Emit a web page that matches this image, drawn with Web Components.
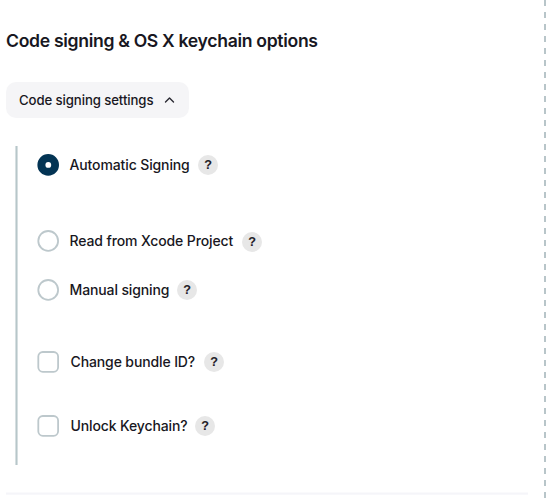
<!DOCTYPE html>
<html lang="en">
<head>
<meta charset="utf-8">
<title>Code signing</title>
<style>
body{margin:0;background:#fff;color:#181722;font-family:Inter,"Liberation Sans",sans-serif;overflow:hidden}
</style>
</head>
<body>
<signing-page>
  <section-title slot="title">Code signing &amp; OS X keychain options</section-title>
  <toggle-button slot="toggle">Code signing settings</toggle-button>
  <option-group>
    <option-row kind="radio" checked style="--w:120px;--qy:0px">Automatic Signing</option-row>
    <option-row kind="radio" style="--gap:54px;--w:164px;--qy:1px">Read from Xcode Project</option-row>
    <option-row kind="radio" style="--gap:27px;--w:99px">Manual signing</option-row>
    <option-row kind="check" style="--gap:50px;--w:125px">Change bundle ID?</option-row>
    <option-row kind="check" style="--gap:42px;--w:116px">Unlock Keychain?</option-row>
  </option-group>
</signing-page>
<script>
const define = (name, html) => customElements.define(name, class extends HTMLElement {
  constructor() {
    super();
    this.attachShadow({mode: 'open'}).innerHTML = html;
  }
});

define('help-badge', `<style>
:host{display:flex;flex:none;box-sizing:border-box;width:20px;height:20px;padding-top:1px;border-radius:50%;background:#e7e7e7;align-items:center;justify-content:center;font:700 13px/19px "Liberation Mono",monospace;color:#222129}
</style><span>?</span>`);

define('section-title', `<style>
:host{display:block}
h2{margin:0;font-size:17.6px;line-height:24px;font-weight:600;letter-spacing:-.32px;white-space:nowrap}
</style><h2><slot></slot></h2>`);

define('toggle-button', `<style>
:host{display:block}
button{display:flex;align-items:center;box-sizing:border-box;width:183px;height:36px;margin:0;border:0;padding:0 14px 0 13px;justify-content:space-between;border-radius:10px;background:#f5f5f7;color:inherit;font:500 13.2px/20px Inter,sans-serif;letter-spacing:-.1px;white-space:nowrap}
svg{display:block}
</style><button><span><slot></slot></span><svg width="11" height="8" viewBox="0 0 11 8" fill="none" stroke="#292832" stroke-width="1.4" stroke-linecap="round" stroke-linejoin="round"><path d="M1.5 5.9 5.5 1.9 9.5 5.9"/></svg></button>`);

define('option-row', `<style>
:host{display:flex;align-items:center;height:22px;margin-top:var(--gap,0);font-size:14px;line-height:22px;font-weight:500;letter-spacing:-.12px;white-space:nowrap}
svg{display:block;flex:none;margin-right:10.5px}
rect{fill:#fff;stroke:#bdc8cc;stroke-width:1.8}
.dot{display:none}
:host([kind=check]) svg{margin-right:11.5px}
:host([kind=check]) rect{rx:4.5px}
:host([checked]) rect{fill:#033454;stroke:#033454}
:host([checked]) .dot{display:block}
.label{width:var(--w);margin-right:8.7px}
help-badge{margin-top:calc(var(--qy,0px) * 2)}
</style><svg width="22" height="22" viewBox="0 0 22 22"><rect x="1.3" y="1" width="19.8" height="19.8" rx="9.9"/><circle class="dot" cx="11.3" cy="10.9" r="2.9" fill="#fff"/></svg><span class="label"><slot></slot></span><help-badge></help-badge>`);

define('option-group', `<style>
:host{display:block;box-sizing:border-box;height:319px;margin-left:9px;padding:8px 0 0 22px;background:linear-gradient(to right,#d6dfe1 1px,#b7c6c9 1px 2px,#d6dfe1 2px) left/3px 100% no-repeat}
</style><slot></slot>`);

define('signing-page', `<style>
:host{display:grid;grid-template-columns:544px 2px;height:500px}
main{box-sizing:border-box;padding:29px 16px 0 6px}
.toggle{margin:29px 0 28px}
hr{height:3px;border:0;margin:27px 0 0;background:linear-gradient(#fafafc 1px,#f5f5f9 1px 2px,#f8f8fb 2px)}
.rule{background:repeating-linear-gradient(to bottom,#b8c5c9 0 6.5px,transparent 6.5px 12px)}
</style><main><slot name="title"></slot><div class="toggle"><slot name="toggle"></slot></div><slot></slot><hr></main><div class="rule"></div>`);
</script>
</body>
</html>
